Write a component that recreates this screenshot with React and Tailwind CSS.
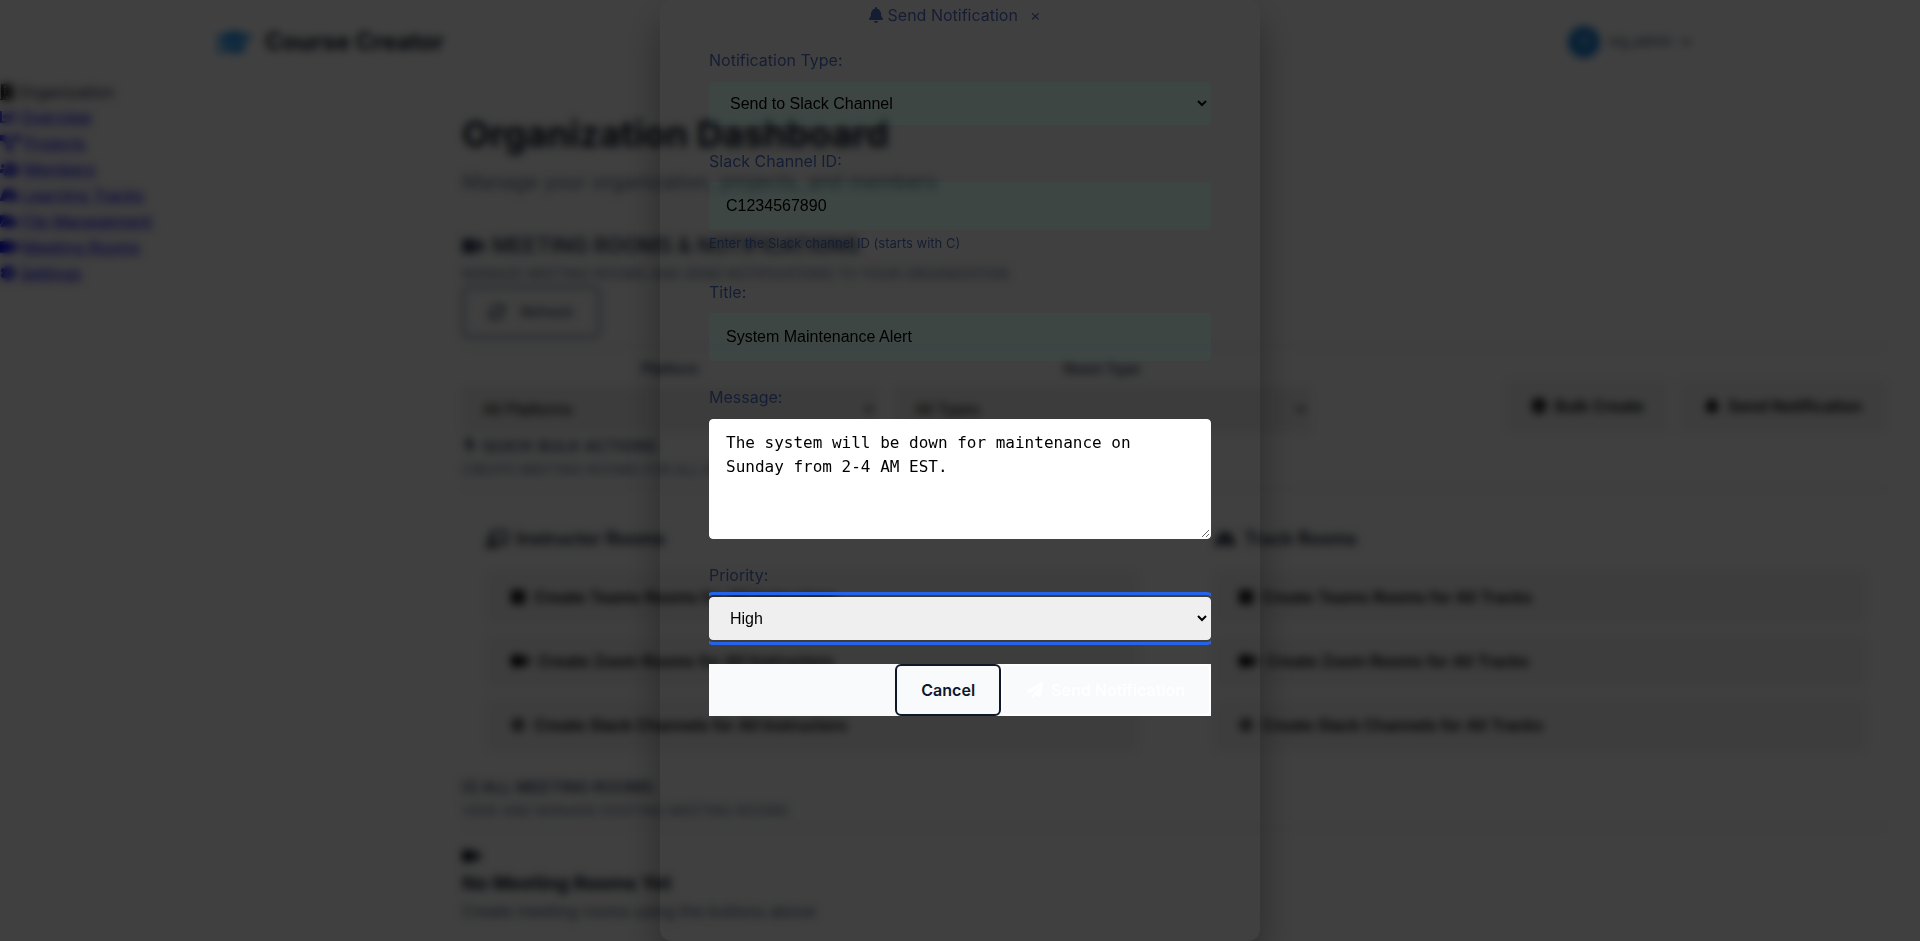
import { FaBell, FaPaperPlane, FaBuilding, FaChartLine, FaProjectDiagram, FaUsers, FaRoad, FaFolderOpen, FaVideo, FaCog, FaGraduationCap, FaChevronDown, FaSync, FaLayerGroup, FaBolt, FaChalkboardTeacher, FaMicrosoft, FaSlack, FaList } from "react-icons/fa";

const navItems = [
  { label: "Overview", icon: FaChartLine, size: "w-4" },
  { label: "Projects", icon: FaProjectDiagram, size: "w-5" },
  { label: "Members", icon: FaUsers, size: "w-5" },
  { label: "Learning Tracks", icon: FaRoad, size: "w-[18px]" },
  { label: "File Management", icon: FaFolderOpen, size: "w-[18px]" },
  { label: "Meeting Rooms", icon: FaVideo, size: "w-[18px]" },
  { label: "Settings", icon: FaCog, size: "w-4" },
];

const bulkGroups = [
  {
    title: "Instructor Rooms",
    icon: FaChalkboardTeacher,
    actions: [
      { label: "Create Teams Rooms for All Instructors", icon: FaMicrosoft, size: "w-4" },
      { label: "Create Zoom Rooms for All Instructors", icon: FaVideo, size: "w-5" },
      { label: "Create Slack Channels for All Instructors", icon: FaSlack, size: "w-4" },
    ],
  },
  {
    title: "Track Rooms",
    icon: FaRoad,
    actions: [
      { label: "Create Teams Rooms for All Tracks", icon: FaMicrosoft, size: "w-4" },
      { label: "Create Zoom Rooms for All Tracks", icon: FaVideo, size: "w-5" },
      { label: "Create Slack Channels for All Tracks", icon: FaSlack, size: "w-4" },
    ],
  },
];

function Header() {
  return (
    <header className="flex h-20 items-center justify-between border-b border-gray-100 bg-white px-[216px] pt-1">
      <div className="flex items-center gap-3 text-2xl font-bold text-slate-900">
        <FaGraduationCap className="h-[30px] w-[37px] text-[#2196f3]" />
        <span>Course Creator</span>
      </div>
      <button className="mr-3 flex items-center gap-2 text-[13px] text-slate-700">
        <span className="flex size-8 items-center justify-center rounded-full bg-[#1a7fd4] text-white">O</span>
        org_admin
        <FaChevronDown className="size-3" />
      </button>
    </header>
  );
}

function Sidebar() {
  return (
    <aside className="w-[462px] shrink-0">
      <div className="flex h-6 items-center gap-1 text-slate-800">
        <FaBuilding className="h-4 w-[14px] text-black" /> Organization
      </div>
      <nav className="flex flex-col">
        {navItems.map(({ label, icon: Icon, size }) => (
          <a key={label} href="#" className="flex h-[26px] items-center gap-1 text-[#0000ee] underline">
            <Icon className={"h-4 " + size} /> {label}
          </a>
        ))}
      </nav>
    </aside>
  );
}

function Filter({ id, label, value }) {
  return (
    <div className="flex w-[416px] flex-col gap-2">
      <label htmlFor={id} className="text-center text-sm font-semibold leading-5 text-slate-700">{label}</label>
      <select id={id} className="h-[45px] rounded border border-slate-200 bg-[#efefef] px-4 font-['Liberation_Sans',sans-serif]">
        <option>{value}</option>
      </select>
    </div>
  );
}

function Dashboard() {
  return (
    <main className="grow pr-[34px] pt-[26px]">
      <h1 className="text-4xl font-bold leading-[56px] text-slate-900">Organization Dashboard</h1>
      <p className="mt-1 text-xl leading-8 text-slate-500">Manage your organization, projects, and members</p>

      <section className="mt-8">
        <h2 className="flex items-center gap-2 text-[21px] font-semibold uppercase leading-8 text-slate-700">
          <FaVideo className="h-5 w-[22px]" /> Meeting Rooms &amp; Notifications
        </h2>
        <p className="text-sm uppercase leading-6 text-slate-500">Manage meeting rooms and send notifications to your organization</p>
        <button className="flex h-[52px] w-[138px] items-center justify-center gap-4 rounded-md border-2 border-slate-500 text-sm font-semibold text-slate-600">
          <FaSync className="size-4" /> Refresh
        </button>

        <div className="mt-2 flex items-end justify-between border-t border-slate-200 pt-3">
          <div className="flex gap-4">
            <Filter id="platform" label="Platform" value="All Platforms" />
            <Filter id="room-type" label="Room Type" value="All Types" />
          </div>
          <div className="flex gap-3">
            <button className="flex h-[52px] items-center gap-2 rounded bg-[#f3f3f3] px-6 font-semibold">
              <FaLayerGroup className="size-4" /> Bulk Create
            </button>
            <button className="flex h-[52px] items-center gap-2 rounded bg-[#f3f3f3] px-6 font-semibold">
              <FaBell className="size-4" /> Send Notification
            </button>
          </div>
        </div>
      </section>

      <section className="mt-0.5">
        <h3 className="flex items-center gap-1 font-semibold uppercase leading-6 text-slate-600">
          <FaBolt className="size-4" /> Quick Bulk Actions
        </h3>
        <p className="text-sm uppercase leading-6 text-slate-500">Create meeting rooms for all instructors or tracks at once</p>
        <div className="mt-1.5 grid grid-cols-2 gap-[76px] border-t border-slate-200 pl-6 pr-5 pt-[34px]">
          {bulkGroups.map(({ title, icon: GroupIcon, actions }) => (
            <div key={title} className="flex flex-col gap-3">
              <h4 className="mb-1 flex items-center gap-2 text-lg font-semibold leading-8 text-slate-900">
                <GroupIcon className="h-[18px] w-[22px]" /> {title}
              </h4>
              {actions.map(({ label, icon: Icon, size }) => (
                <button key={label} className="flex h-[52px] items-center gap-2 rounded bg-[#f3f3f3] px-6 font-semibold">
                  <Icon className={"h-4 " + size} /> {label}
                </button>
              ))}
            </div>
          ))}
        </div>
      </section>

      <section className="mt-6">
        <h3 className="flex items-center gap-1 font-semibold uppercase leading-6 text-slate-600">
          <FaList className="size-4" /> All Meeting Rooms
        </h3>
        <p className="text-sm uppercase leading-6 text-slate-500">View and manage existing meeting rooms</p>
        <div className="mt-1 border-t border-slate-200 pt-5">
          <FaVideo className="h-4 w-[18px] text-slate-900" />
          <h3 className="mt-1.5 text-[19px] font-bold leading-7 text-slate-900">No Meeting Rooms Yet</h3>
          <p className="leading-[26px] text-slate-600">Create meeting rooms using the buttons above</p>
        </div>
      </section>
    </main>
  );
}

const fieldClass = "w-full rounded border border-transparent bg-[rgba(16,185,129,0.05)] px-4 font-['Liberation_Sans',sans-serif] text-base text-black outline-none";
const labelClass = "text-base leading-6 text-[#141d33]";

function NotificationDialog() {
  return (
    <div role="dialog" aria-modal="true" aria-labelledby="dialog-title" className="flex h-full w-[600px] flex-col rounded-xl px-[49px] shadow-[0_20px_40px_rgba(0,0,0,0.35)]">
      <div className="flex h-[30px] items-center justify-center gap-3 pr-3 text-[#141d33]">
        <h2 id="dialog-title" className="flex items-center gap-1">
          <FaBell className="size-4" /> Send Notification
        </h2>
        <button aria-label="Close">×</button>
      </div>

      <form className="flex flex-col overflow-hidden pt-[18px]" onSubmit={(e) => e.preventDefault()}>
        <label htmlFor="type" className={labelClass}>Notification Type:</label>
        <select id="type" className={fieldClass + " mt-[10px] h-[43px]"}>
          <option>Send to Slack Channel</option>
        </select>

        <label htmlFor="channel" className={labelClass + " mt-6"}>Slack Channel ID:</label>
        <input id="channel" defaultValue="C1234567890" className={fieldClass + " mt-[9px] h-12"} />
        <p className="mt-1 text-[13px] leading-[18px] text-[#141d33]">Enter the Slack channel ID (starts with C)</p>

        <label htmlFor="title" className={labelClass + " mt-7"}>Title:</label>
        <input id="title" defaultValue="System Maintenance Alert" className={fieldClass + " mt-[9px] h-12"} />

        <label htmlFor="message" className={labelClass + " mt-6"}>Message:</label>
        <textarea id="message" className="mt-[10px] h-[120px] w-full rounded border border-white bg-white px-4 py-[11px] font-['DejaVu_Sans_Mono',monospace] text-base leading-6 text-black" defaultValue="The system will be down for maintenance on Sunday from 2-4 AM EST." />

        <label htmlFor="priority" className={labelClass + " mt-6"}>Priority:</label>
        <select id="priority" className="mt-[10px] h-[43px] w-full rounded border border-[#efefef] bg-[#efefef] px-4 font-['Liberation_Sans',sans-serif] text-base text-black outline-3 outline-offset-2 outline-[#2563eb]">
          <option>High</option>
        </select>

        <div className="mt-6 flex justify-end bg-[#f8fafc]">
          <button type="button" className="h-[52px] rounded-md border-2 border-[#0f172a] px-6 font-semibold text-[#0f172a]">Cancel</button>
          <button type="submit" className="flex h-[52px] items-center gap-2 rounded-md border-2 border-white bg-[#f8fafc] px-6 font-semibold text-white">
            <FaPaperPlane /> Send Notification
          </button>
        </div>
      </form>
    </div>
  );
}

export default function App() {
  return (
    <div className="relative h-screen overflow-hidden bg-[#fdfdfd] font-['Inter',sans-serif]">
      <Header />
      <div className="flex">
        <Sidebar />
        <Dashboard />
      </div>
      <div className="fixed inset-0 flex justify-center bg-black/75 backdrop-blur-[4px]">
        <NotificationDialog />
      </div>
    </div>
  );
}
